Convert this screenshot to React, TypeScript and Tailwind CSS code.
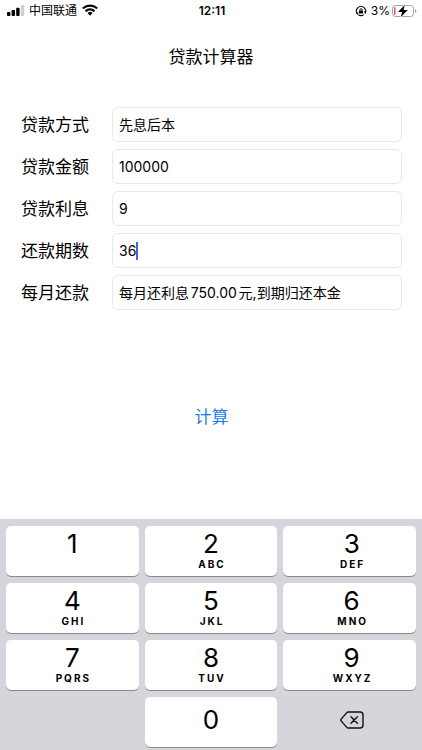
import { useState } from 'react';
import type { ReactNode } from 'react';

// ─── Data ─────────────────────────────────────────────────────────────────────

const KEYS = [
  { digit: '1', letters: '' },
  { digit: '2', letters: 'ABC' },
  { digit: '3', letters: 'DEF' },
  { digit: '4', letters: 'GHI' },
  { digit: '5', letters: 'JKL' },
  { digit: '6', letters: 'MNO' },
  { digit: '7', letters: 'PQRS' },
  { digit: '8', letters: 'TUV' },
  { digit: '9', letters: 'WXYZ' },
];

const KEY_CLASS =
  'flex h-[50px] flex-col items-center rounded-[5px] bg-white shadow-[0_1px_0_#898a8d]';

type NumericField = 'amount' | 'rate' | 'periods';

// Interest-only loan: interest every month, principal at maturity.
function describePayment(amount: string, rate: string) {
  const monthly = (Number(amount) * Number(rate)) / 100 / 12;
  return `每月还利息${monthly.toFixed(2)}元,到期归还本金`;
}

// ─── Component ────────────────────────────────────────────────────────────────

export default function App() {
  const [values, setValues] = useState({ amount: '100000', rate: '9', periods: '36' });
  const [active, setActive] = useState<NumericField>('periods');
  const [result, setResult] = useState(describePayment('100000', '9'));

  const press = (digit: string) =>
    setValues((prev) => ({ ...prev, [active]: prev[active] + digit }));

  const erase = () =>
    setValues((prev) => ({ ...prev, [active]: prev[active].slice(0, -1) }));

  const numeric = (name: NumericField) => ({
    id: name,
    value: values[name],
    active: active === name,
    onFocus: () => setActive(name),
    onChange: (value: string) => setValues((prev) => ({ ...prev, [name]: value })),
  });

  return (
    <div className="flex min-h-screen flex-col bg-white font-[Inter,'Noto_Sans_CJK_SC',sans-serif] text-black">
      <StatusBar />

      <h1 className="mt-6 text-center text-[17px] leading-6">贷款计算器</h1>

      <main className="mt-[38px] flex flex-col pr-5 pl-[21px]">
        <div className="flex flex-col gap-[7px]">
          <Field label="贷款方式" id="method" value="先息后本" />
          <Field label="贷款金额" {...numeric('amount')} />
          <Field label="贷款利息" {...numeric('rate')} />
          <Field label="还款期数" {...numeric('periods')} />
          <Field label="每月还款" id="result" value={result} />
        </div>
        <button
          type="button"
          onClick={() => setResult(describePayment(values.amount, values.rate))}
          className="mt-[95px] self-center text-[17px] leading-6 text-[#1a7cf0]"
        >
          计算
        </button>
      </main>

      <section
        aria-label="数字键盘"
        className="mt-auto grid grid-cols-3 gap-x-[6px] gap-y-[7px] bg-[#d5d6dc] px-[6px] pt-[7px] pb-[3px]"
      >
        {KEYS.map(({ digit, letters }) => (
          <button
            key={digit}
            type="button"
            onClick={() => press(digit)}
            className={`${KEY_CLASS} pt-1 nth-[3n]:pl-1`}
          >
            <span className="text-[26px] leading-7">{digit}</span>
            {letters && (
              <span className="pl-[2px] text-[10px] leading-3 font-bold tracking-[2px]">
                {letters}
              </span>
            )}
          </button>
        ))}
        <button
          type="button"
          onClick={() => press('0')}
          className={`${KEY_CLASS} col-start-2 justify-center pb-1`}
        >
          <span className="text-[26px] leading-7">0</span>
        </button>
        <button
          type="button"
          aria-label="删除"
          onClick={erase}
          className="flex items-center justify-center pb-1 pl-1"
        >
          <svg width="24" height="18" viewBox="0 0 24 18" fill="none" stroke="#111" strokeLinecap="round" strokeLinejoin="round">
            <path strokeWidth="1.4" d="M8.2 1H20a3 3 0 0 1 3 3v10a3 3 0 0 1-3 3H8.2a2 2 0 0 1-1.4-.6L1.3 10.1a1.6 1.6 0 0 1 0-2.2L6.8 1.6A2 2 0 0 1 8.2 1Z" />
            <path strokeWidth="1.4" d="m11 5.7 6.4 6.6M17.4 5.7 11 12.3" />
          </svg>
        </button>
      </section>
    </div>
  );
}

// ─── Form row ─────────────────────────────────────────────────────────────────

type FieldProps = {
  label: ReactNode;
  id: string;
  value: string;
  active?: boolean;
  onFocus?: () => void;
  onChange?: (value: string) => void;
};

function Field({ label, id, value, active, onFocus, onChange }: FieldProps) {
  return (
    <div className="flex items-center">
      <label htmlFor={id} className="w-[91px] shrink-0 text-[17px] leading-6">
        {label}
      </label>
      <div className="flex h-[35px] min-w-0 flex-1 items-center rounded-[6px] border border-[#e8e8e8] px-[6px]">
        <input
          id={id}
          value={value}
          readOnly={!onChange}
          inputMode="none"
          onFocus={onFocus}
          onChange={(e) => onChange?.(e.target.value)}
          className={`text-[14px] leading-5 caret-transparent outline-none [text-autospace:normal] ${
            active ? 'field-sizing-content' : 'w-full'
          }`}
        />
        {active && <span aria-hidden="true" className="h-[18px] w-[2px] bg-[#4165e0]" />}
      </div>
    </div>
  );
}

// ─── Status bar ───────────────────────────────────────────────────────────────

function StatusBar() {
  return (
    <header className="grid h-[21px] grid-cols-[1fr_auto_1fr] items-center pr-[5px] pl-[7px] text-[12px] leading-4">
      <div className="flex items-center gap-1">
        <svg width="18" height="11" viewBox="0 0 18 11" aria-hidden="true">
          <rect x="0" y="7" width="3.4" height="4" rx="0.9" />
          <rect x="4.6" y="5" width="3.4" height="6" rx="0.9" />
          <rect x="9.2" y="2.8" width="3.4" height="8.2" rx="0.9" />
          <rect x="13.8" y="0" width="3.4" height="11" rx="0.9" fill="#cfcfcf" />
        </svg>
        <span>中国联通</span>
        <svg width="18" height="13" viewBox="0 0 16 12" aria-hidden="true">
          <path d="M8 2.5c2.1 0 4.1.8 5.6 2.2.1.1.3.1.4 0l1.1-1.1c.1-.1.1-.3 0-.4a10.3 10.3 0 0 0-14.2 0c-.1.1-.1.3 0 .4L2 4.7c.1.1.3.1.4 0A8.2 8.2 0 0 1 8 2.5Z" />
          <path d="M8 6.1c1.2 0 2.3.4 3.1 1.2.1.1.3.1.4 0l1.1-1.1c.1-.1.1-.3 0-.4a6.7 6.7 0 0 0-9.2 0c-.1.1-.1.3 0 .4l1.1 1.1c.1.1.3.1.4 0A4.6 4.6 0 0 1 8 6.1Z" />
          <path d="M10.2 8.6c.1-.1.1-.3 0-.4a3.4 3.4 0 0 0-4.4 0c-.1.1-.1.3 0 .4l2 2c.1.1.3.1.4 0Z" />
        </svg>
      </div>

      <time className="font-semibold">12:11</time>

      <div className="flex items-center justify-end gap-1">
        <svg width="12" height="12" viewBox="0 0 12 12" fill="none" stroke="#000" aria-hidden="true">
          <path strokeWidth="1.1" d="M2.2 8.6A4.6 4.6 0 1 1 9.8 8.6" />
          <path strokeWidth="1.1" d="M3.4 9.8a4.6 4.6 0 0 0 5.4-.2" />
          <path fill="#000" stroke="none" d="m.8 7.6 2.6-.2-.6 2.5ZM11.4 6.2 8.8 6.3l1.7 2Z" />
          <rect x="4" y="5.4" width="4" height="3" rx="0.5" fill="#000" stroke="none" />
          <path strokeWidth="0.9" d="M4.9 5.6v-.8a1.1 1.1 0 0 1 2.2 0v.8" />
        </svg>
        <span>3%</span>
        <svg width="25" height="14" viewBox="0 0 25 14" className="-ml-[2px]" aria-hidden="true">
          <rect x="0.5" y="1.5" width="21" height="11" rx="3" fill="none" stroke="#a3a3a3" />
          <path d="M23 5v4c.9-.3 1.4-1.1 1.4-2s-.5-1.7-1.4-2Z" fill="#a3a3a3" />
          <rect x="2" y="3" width="1.5" height="8" rx="0.7" fill="#f0524f" />
          <path d="M12.8.8 6 7.9h4.1L8.7 13.2l7.1-7.2h-4.2Z" stroke="#fff" strokeWidth="1.4" paintOrder="stroke" />
        </svg>
      </div>
    </header>
  );
}
